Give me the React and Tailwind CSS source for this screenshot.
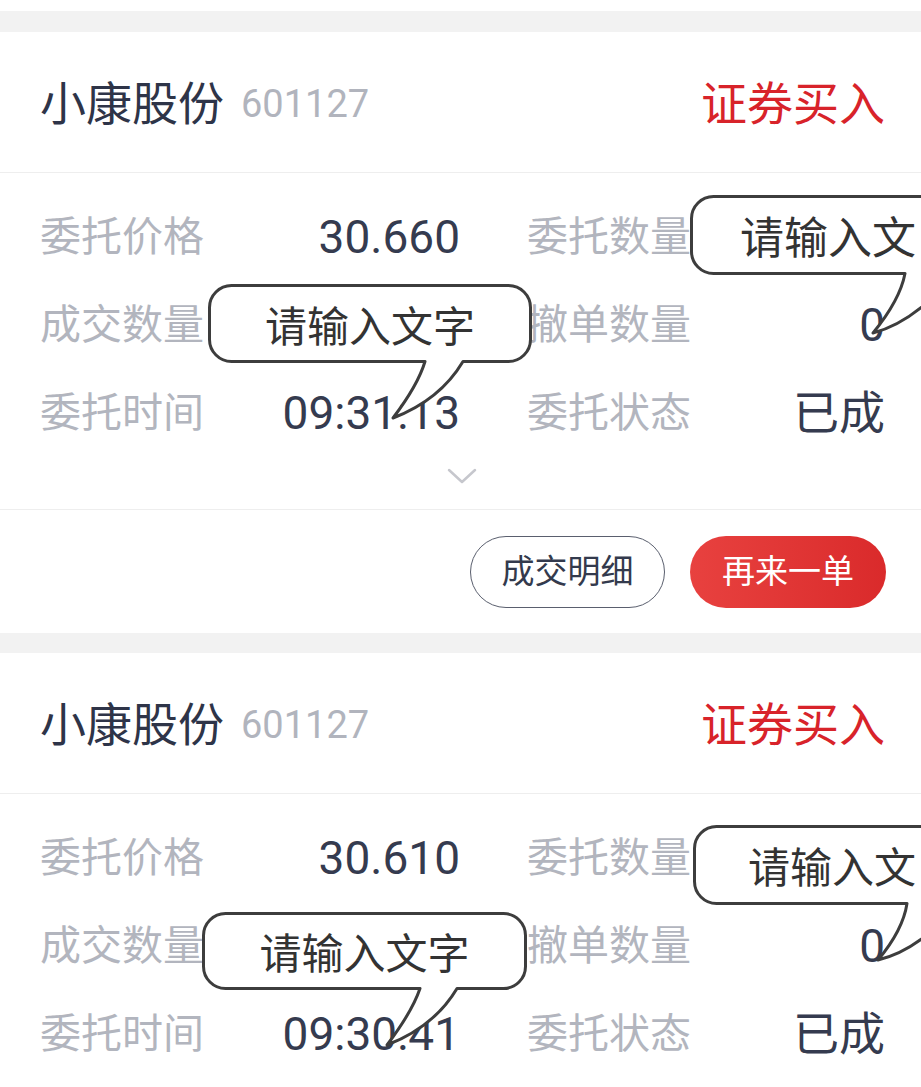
import React from "react";

const font = "font-['Roboto','Noto_Sans_CJK_SC',sans-serif]";

function Row({ l1, v1, l2, v2 }) {
  return (
    <div className="flex h-[88px] items-center">
      <div className="flex w-[420px] items-center justify-between">
        <span className="text-[41px] leading-none text-[#b2b5be]">{l1}</span>
        <span className="text-[46px] leading-none text-[#353b4f]">{v1}</span>
      </div>
      <div className="ml-[67px] flex flex-1 items-center justify-between">
        <span className="text-[41px] leading-none text-[#b2b5be]">{l2}</span>
        <span className="text-[46px] leading-none text-[#353b4f]">{v2}</span>
      </div>
    </div>
  );
}

function Card({ price, time, footer }) {
  return (
    <div className="bg-white">
      <div className="flex h-[141px] items-center justify-between border-b border-[#eeeeee] pl-[40px] pr-[36px] pt-[4px]">
        <div className="flex items-center">
          <span className="text-[46px] leading-none text-[#2e3448]">小康股份</span>
          <span className="ml-[17px] text-[38px] leading-none text-[#b1b4bd]">601127</span>
        </div>
        <span className="text-[46px] leading-none text-[#d8232a]">证券买入</span>
      </div>
      <div className="pl-[40px] pr-[36px] pt-[20px]">
        <Row l1="委托价格" v1={price} l2="委托数量" v2="" />
        <Row l1="成交数量" v1="" l2="撤单数量" v2="0" />
        <Row l1="委托时间" v1={time} l2="委托状态" v2="已成" />
      </div>
      <div className="flex h-[53px] justify-center border-b border-[#eeeeee] pt-[11px]">
        <svg width="30" height="16" viewBox="0 0 30 16" className="ml-[3px]">
          <polyline points="2,2 15,14 28,2" fill="none" stroke="#c6c7cd" strokeWidth="2.5" strokeLinecap="round" strokeLinejoin="round" />
        </svg>
      </div>
      {footer && (
        <div className="flex h-[123px] items-center justify-end gap-[25px] pr-[35px]">
          <button className="flex h-[72px] w-[195px] items-center justify-center rounded-full border border-[#5a5f6e] text-[33px] leading-none text-[#333a4d]">
            成交明细
          </button>
          <button className="flex h-[72px] w-[196px] items-center justify-center rounded-full bg-linear-to-r from-[#e8413f] to-[#da2a2b] text-[33px] leading-none text-white">
            再来一单
          </button>
        </div>
      )}
    </div>
  );
}

const bubbles = [
  "M 231.5 285.5 H 508.5 A 22 22 0 0 1 530.5 307.5 V 339.5 A 22 22 0 0 1 508.5 361.5 H 463 Q 440 400 393 418 Q 418 385 425 361.5 H 231.5 A 22 22 0 0 1 209.5 339.5 V 307.5 A 22 22 0 0 1 231.5 285.5 Z",
  "M 713.5 196.5 H 1000 V 273.5 H 955 Q 915 322 873 333 Q 900 300 905 273.5 H 713.5 A 22 22 0 0 1 691.5 251.5 V 218.5 A 22 22 0 0 1 713.5 196.5 Z",
  "M 225.5 913.5 H 503.5 A 22 22 0 0 1 525.5 935.5 V 966.5 A 22 22 0 0 1 503.5 988.5 H 457 Q 434 1027 387 1045 Q 412 1012 420 988.5 H 225.5 A 22 22 0 0 1 203.5 966.5 V 935.5 A 22 22 0 0 1 225.5 913.5 Z",
  "M 716.5 826.5 H 1000 V 903.5 H 958 Q 920 950 878 960 Q 903 930 907 903.5 H 716.5 A 22 22 0 0 1 694.5 881.5 V 848.5 A 22 22 0 0 1 716.5 826.5 Z",
];

const labels = [
  { cls: "left-[209px] top-[285px] w-[322px] h-[77px] justify-center text-[42px]", t: "请输入文字" },
  { cls: "left-[740px] top-[196px] h-[78px] text-[44px]", t: "请输入文" },
  { cls: "left-[203px] top-[913px] w-[323px] h-[76px] justify-center text-[42px]", t: "请输入文字" },
  { cls: "left-[748px] top-[826px] h-[78px] text-[42px]", t: "请输入文" },
];

export default function App() {
  return (
    <div className={`relative h-[1087px] w-[921px] overflow-hidden bg-white ${font}`}>
      <div className="h-[11px] bg-white" />
      <div className="h-[21px] bg-[#f2f2f2]" />
      <Card price="30.660" time="09:31:13" footer />
      <div className="h-[20px] bg-[#f2f2f2]" />
      <Card price="30.610" time="09:30:41" footer={false} />

      <svg className="pointer-events-none absolute left-0 top-0" width="921" height="1087" viewBox="0 0 921 1087">
        {bubbles.map((d, i) => (
          <path key={i} d={d} fill="#ffffff" stroke="#3d3d3d" strokeWidth="3" strokeLinejoin="round" />
        ))}
      </svg>
      {labels.map((l, i) => (
        <div
          key={i}
          className={`pointer-events-none absolute flex items-center whitespace-nowrap font-['Noto_Sans_CJK_SC',sans-serif] leading-none text-[#333333] ${l.cls}`}
        >
          {l.t}
        </div>
      ))}
    </div>
  );
}
